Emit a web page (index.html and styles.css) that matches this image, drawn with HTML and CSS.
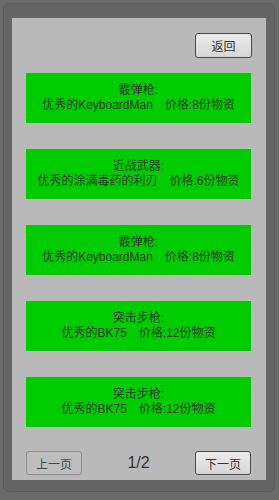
FILE: index.html
```html
<!DOCTYPE html>
<html lang="zh-CN">
<head>
    <meta charset="UTF-8">
    <meta name="viewport" content="width=device-width, initial-scale=1.0">
    <title>商店</title>
    <link rel="stylesheet" href="styles.css">
</head>
<body>
    <div class="frame">
        <div class="shop-panel">
            <div class="header">
                <button class="btn">返回</button>
            </div>
            <div class="item-list">
                <div class="item">霰弹枪:<br>优秀的KeyboardMan　价格:8份物资</div>
                <div class="item">近战武器:<br>优秀的涂满毒药的利刃　价格:6份物资</div>
                <div class="item">霰弹枪:<br>优秀的KeyboardMan　价格:8份物资</div>
                <div class="item">突击步枪:<br>优秀的BK75　价格:12份物资</div>
                <div class="item">突击步枪:<br>优秀的BK75　价格:12份物资</div>
            </div>
            <div class="footer">
                <button class="btn btn-disabled">上一页</button>
                <span class="page-num">1/2</span>
                <button class="btn">下一页</button>
            </div>
        </div>
    </div>
</body>
</html>
```

FILE: styles.css
```css
body {
    margin: 0;
    background-color: #6a6a6a;
    font-family: "Liberation Sans", "Noto Sans CJK SC", sans-serif;
    width: 279px;
    height: 500px;
    overflow: hidden;
}
.frame {
    margin: 3px 4px 0 3px;
    height: 489px;
    border: 1px solid #5c5c5c;
    border-radius: 6px;
    background-color: #656565;
    box-sizing: border-box;
    padding: 14px 0 0 8px;
}
.shop-panel {
    width: 254px;
    height: 462px;
    background-color: #b9b9b9;
    box-sizing: border-box;
    padding: 15px 15px 0 14px;
    display: flex;
    flex-direction: column;
}
.header {
    display: flex;
    justify-content: flex-end;
    margin-right: -1px;
}
.btn {
    width: 57px;
    height: 25px;
    padding: 0;
    border: 1px solid #4a4a4a;
    border-radius: 3px;
    background: linear-gradient(#ececec, #d6d6d6);
    color: #333;
    font-family: "Liberation Sans", "Noto Sans CJK SC", sans-serif;
    font-size: 12px;
}
.btn-disabled {
    border-color: #8e8e8e;
    background: #bdbdbd;
    color: #484848;
}
.item-list {
    display: flex;
    flex-direction: column;
    gap: 26px;
    margin-top: 15px;
}
.item {
    height: 50px;
    background-color: #00cc00;
    color: #2a3a2a;
    font-size: 12px;
    line-height: 15px;
    text-align: center;
    display: flex;
    align-items: center;
    justify-content: center;
    flex-direction: column;
}
.footer {
    margin-top: 24px;
    display: flex;
    justify-content: space-between;
    align-items: center;
}
.footer .btn {
    width: 56px;
    height: 24px;
}
.page-num {
    font-size: 16px;
    color: #333;
}
```
